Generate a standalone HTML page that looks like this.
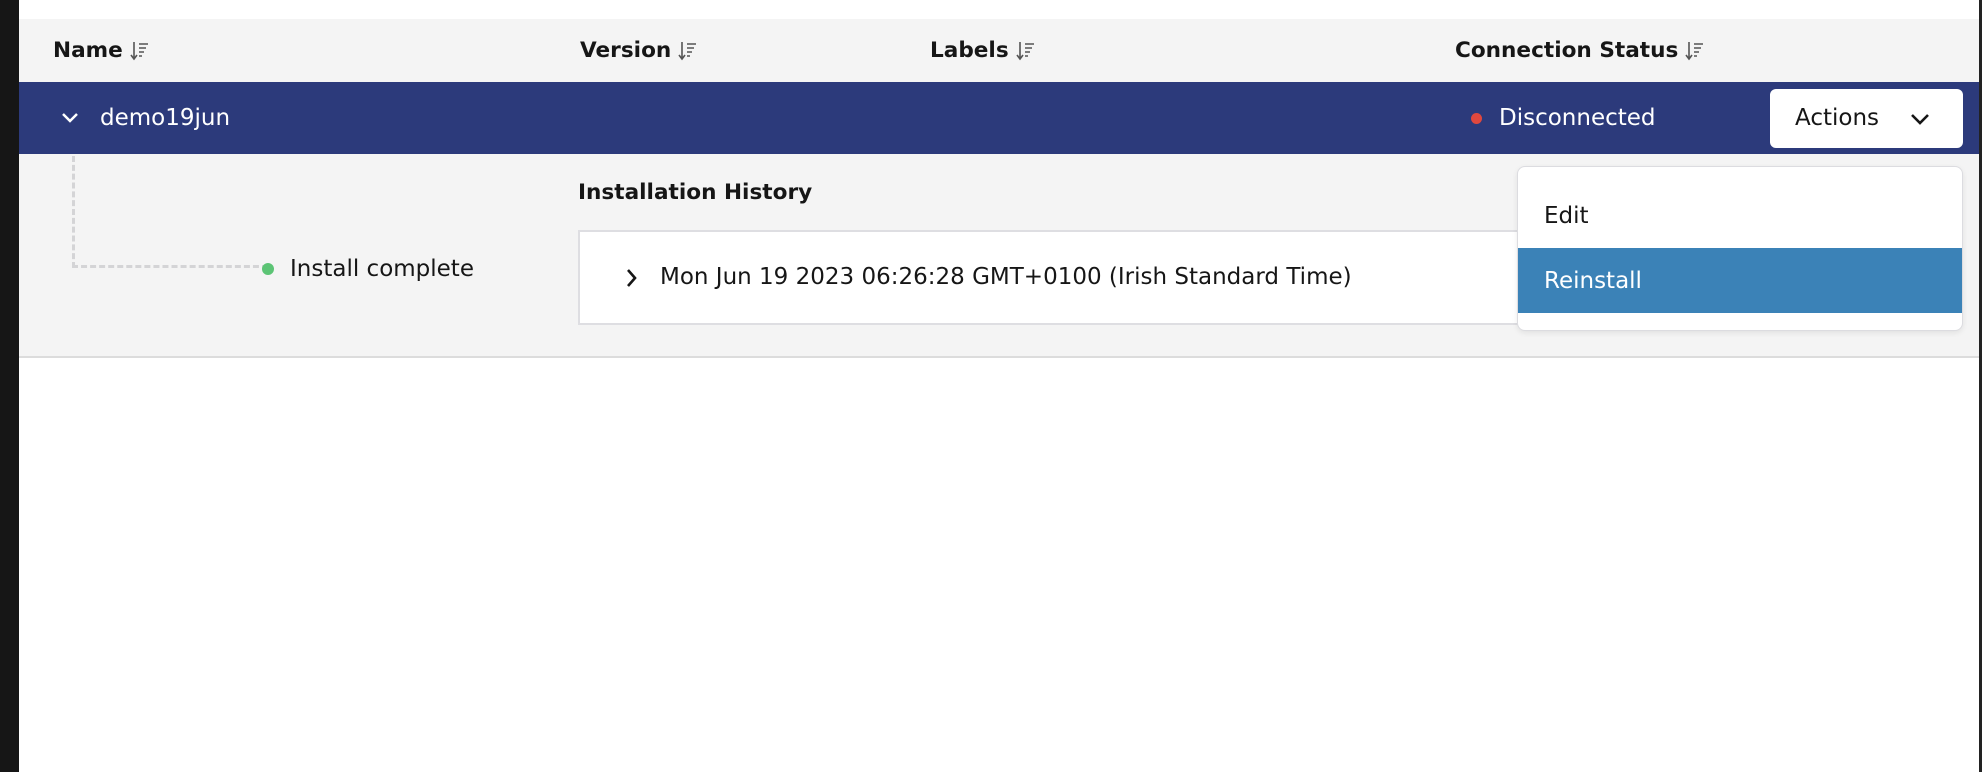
<!DOCTYPE html>
<html><head><meta charset="utf-8"><style>
*{margin:0;padding:0;box-sizing:border-box}
body{width:1982px;height:772px;background:#fff;position:relative;overflow:hidden;font-family:"DejaVu Sans","Liberation Sans",sans-serif;color:#161616}
.abs{position:absolute}
.hd{font-weight:bold;font-size:21.6px;top:38px;display:flex;align-items:center}
.hd svg{margin-left:7px}
.t{font-size:23px}
</style></head><body>
<div class="abs" style="left:0;top:0;width:19px;height:772px;background:#161616"></div>
<div class="abs" style="right:0;top:0;width:3px;height:772px;background:#222"></div>
<div class="abs" style="left:19px;top:19px;width:1960px;height:63px;background:#f4f4f4"></div>
<div class="abs hd" style="left:53px">Name<svg width="20" height="22" viewBox="0 0 20 22"><path d="M4 2v16M1 15l3 4 3-4" stroke="#555" stroke-width="1.6" fill="none"/><path d="M9 4h9M9 8h7M9 12h5M9 16h3" stroke="#555" stroke-width="1.6"/></svg></div>
<div class="abs hd" style="left:580px">Version<svg width="20" height="22" viewBox="0 0 20 22"><path d="M4 2v16M1 15l3 4 3-4" stroke="#555" stroke-width="1.6" fill="none"/><path d="M9 4h9M9 8h7M9 12h5M9 16h3" stroke="#555" stroke-width="1.6"/></svg></div>
<div class="abs hd" style="left:930px">Labels<svg width="20" height="22" viewBox="0 0 20 22"><path d="M4 2v16M1 15l3 4 3-4" stroke="#555" stroke-width="1.6" fill="none"/><path d="M9 4h9M9 8h7M9 12h5M9 16h3" stroke="#555" stroke-width="1.6"/></svg></div>
<div class="abs hd" style="left:1455px">Connection Status<svg width="20" height="22" viewBox="0 0 20 22"><path d="M4 2v16M1 15l3 4 3-4" stroke="#555" stroke-width="1.6" fill="none"/><path d="M9 4h9M9 8h7M9 12h5M9 16h3" stroke="#555" stroke-width="1.6"/></svg></div>
<div class="abs" style="left:19px;top:82px;width:1960px;height:72px;background:#2c3a7b"></div>
<svg class="abs" style="left:61px;top:112px" width="18" height="12" viewBox="0 0 18 12"><path d="M2 2l7 7 7-7" stroke="#fff" stroke-width="2.5" fill="none"/></svg>
<div class="abs t" style="left:100px;top:105px;color:#fff">demo19jun</div>
<div class="abs" style="left:1471px;top:113px;width:11px;height:11px;border-radius:50%;background:#e0483e"></div>
<div class="abs t" style="left:1499px;top:105px;color:#fff">Disconnected</div>
<div class="abs" style="left:1770px;top:89px;width:193px;height:59px;background:#fff;border-radius:6px"></div>
<div class="abs t" style="left:1795px;top:105px">Actions</div>
<svg class="abs" style="left:1910px;top:113px" width="20" height="13" viewBox="0 0 20 13"><path d="M2 2l8 8 8-8" stroke="#161616" stroke-width="2.6" fill="none"/></svg>
<div class="abs" style="left:19px;top:154px;width:1960px;height:204px;background:#f4f4f4;border-bottom:2px solid #dcdcdc"></div>
<div class="abs" style="left:72px;top:156px;width:196px;height:112px;border-left:3px dashed #d4d4d6;border-bottom:3px dashed #d4d4d6"></div>
<div class="abs" style="left:262px;top:263px;width:12px;height:12px;border-radius:50%;background:#5cc475"></div>
<div class="abs t" style="left:290px;top:256px">Install complete</div>
<div class="abs" style="left:578px;top:180px;font-size:21.6px;font-weight:bold">Installation History</div>
<div class="abs" style="left:578px;top:230px;width:1000px;height:95px;background:#fff;border:2px solid #dedee2"></div>
<svg class="abs" style="left:626px;top:268px" width="12" height="20" viewBox="0 0 12 20"><path d="M2 2l7 8-7 8" stroke="#161616" stroke-width="2.6" fill="none"/></svg>
<div class="abs t" style="left:660px;top:264px">Mon Jun 19 2023 06:26:28 GMT+0100 (Irish Standard Time)</div>
<div class="abs" style="left:1517px;top:166px;width:446px;height:165px;background:#fff;border:1.5px solid #dcdce0;border-radius:8px;box-shadow:0 2px 6px rgba(0,0,0,.08);overflow:hidden">
<div class="t" style="position:absolute;left:26px;top:36px">Edit</div>
<div style="position:absolute;left:0;top:81px;width:100%;height:65px;background:#3b82b7"></div>
<div class="t" style="position:absolute;left:26px;top:101px;color:#fff">Reinstall</div>
</div>
</body></html>
